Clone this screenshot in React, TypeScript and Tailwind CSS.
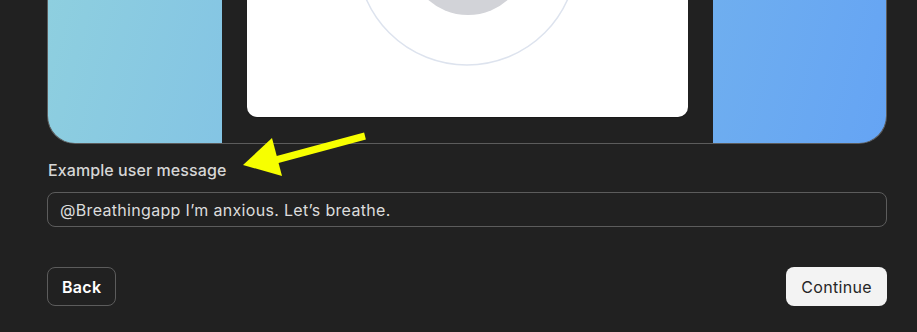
import React from 'react';

function Preview() {
    return (
        <div className="h-[144px] rounded-b-[28px] border border-t-0 border-[#5c5c5c] overflow-hidden bg-linear-[105deg] from-[#8ecfdf] to-[#65a4f4] flex">
            <div className="w-[174px] shrink-0" />
            <div className="w-[491px] shrink-0 bg-[#212121] flex items-end px-[25px] pb-[26px]">
                <div className="relative w-full h-[117px] bg-white rounded-b-[10px] shadow-[0_1px_1px_rgba(0,0,0,0.25)] overflow-hidden">
                    <svg className="absolute inset-0 w-full h-full" viewBox="0 0 441 117">
                        <circle cx="220" cy="-45" r="110" fill="none" stroke="#dde3ee" strokeWidth="1.5" />
                        <circle cx="221" cy="-45" r="60" fill="#d2d3d8" />
                    </svg>
                </div>
            </div>
            <div className="flex-1" />
        </div>
    );
}

export default function App() {
    return (
        <div className="relative w-[917px] h-[332px] bg-[#212121] overflow-hidden" style={{ fontFamily: 'Inter, "Liberation Sans", sans-serif' }}>
            <div className="pl-[47px] pr-[30px] flex flex-col">
                <Preview />

                {/* Example message */}
                <label className="mt-[16px] ml-px text-[16px] tracking-[0.005em] leading-[20px] font-medium text-[#d6d6d6]">
                    Example user message
                </label>
                <div className="mt-[12px] h-[35px] rounded-lg border border-[#5c5c5c] flex items-center px-[12px] text-[16px] tracking-[0.02em] text-[#dcdcdc]">
                    @Breathingapp I’m anxious. Let’s breathe.
                </div>

                {/* Actions */}
                <div className="mt-[40px] flex items-center justify-between">
                    <button className="h-[39px] px-[14px] rounded-lg border border-[#5c5c5c] text-[16px] tracking-[0.02em] font-semibold text-white">
                        Back
                    </button>
                    <button className="h-[39px] px-[15px] rounded-lg bg-[#f3f3f3] text-[16px] tracking-[0.02em] font-normal text-[#262626]">
                        Continue
                    </button>
                </div>
            </div>

            {/* Annotation arrow */}
            <svg className="absolute inset-0 pointer-events-none" width="917" height="332" viewBox="0 0 917 332">
                <line x1="365" y1="136" x2="272" y2="161" stroke="#f7ff00" strokeWidth="7" />
                <polygon points="243,165 272,138 282,176" fill="#f7ff00" />
            </svg>
        </div>
    );
}
